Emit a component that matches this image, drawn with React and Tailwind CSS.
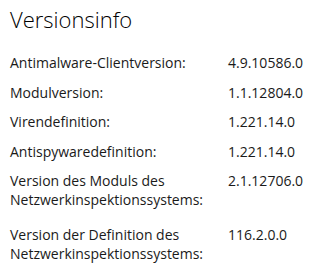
const rows = [
  ["Antimalware-Clientversion:", "4.9.10586.0"],
  ["Modulversion:", "1.1.12804.0"],
  ["Virendefinition:", "1.221.14.0"],
  ["Antispywaredefinition:", "1.221.14.0"],
  ["Version des Moduls des Netzwerkinspektionssystems:", "2.1.12706.0"],
  ["Version der Definition des Netzwerkinspektionssystems:", "116.2.0.0"],
];

export default function App() {
  return (
    <div className="w-[311px] h-[277px] bg-white text-[#1a1a1a] pl-[10px] pt-[4px] font-['Open_Sans',sans-serif] overflow-hidden">
      <h1 className="text-[22px] font-light leading-[30px] text-black">Versionsinfo</h1>
      <div className="mt-[19px] grid grid-cols-[218px_1fr] gap-y-[10.5px] text-[14px] leading-[19px]">
        {rows.map(([k, v], i) => (
          <div key={k} className="contents">
            <div className={`pr-2 ${i === 5 ? "mt-[5px]" : ""}`}>{k}</div>
            <div className={i === 5 ? "mt-[5px]" : ""}>{v}</div>
          </div>
        ))}
      </div>
    </div>
  );
}
